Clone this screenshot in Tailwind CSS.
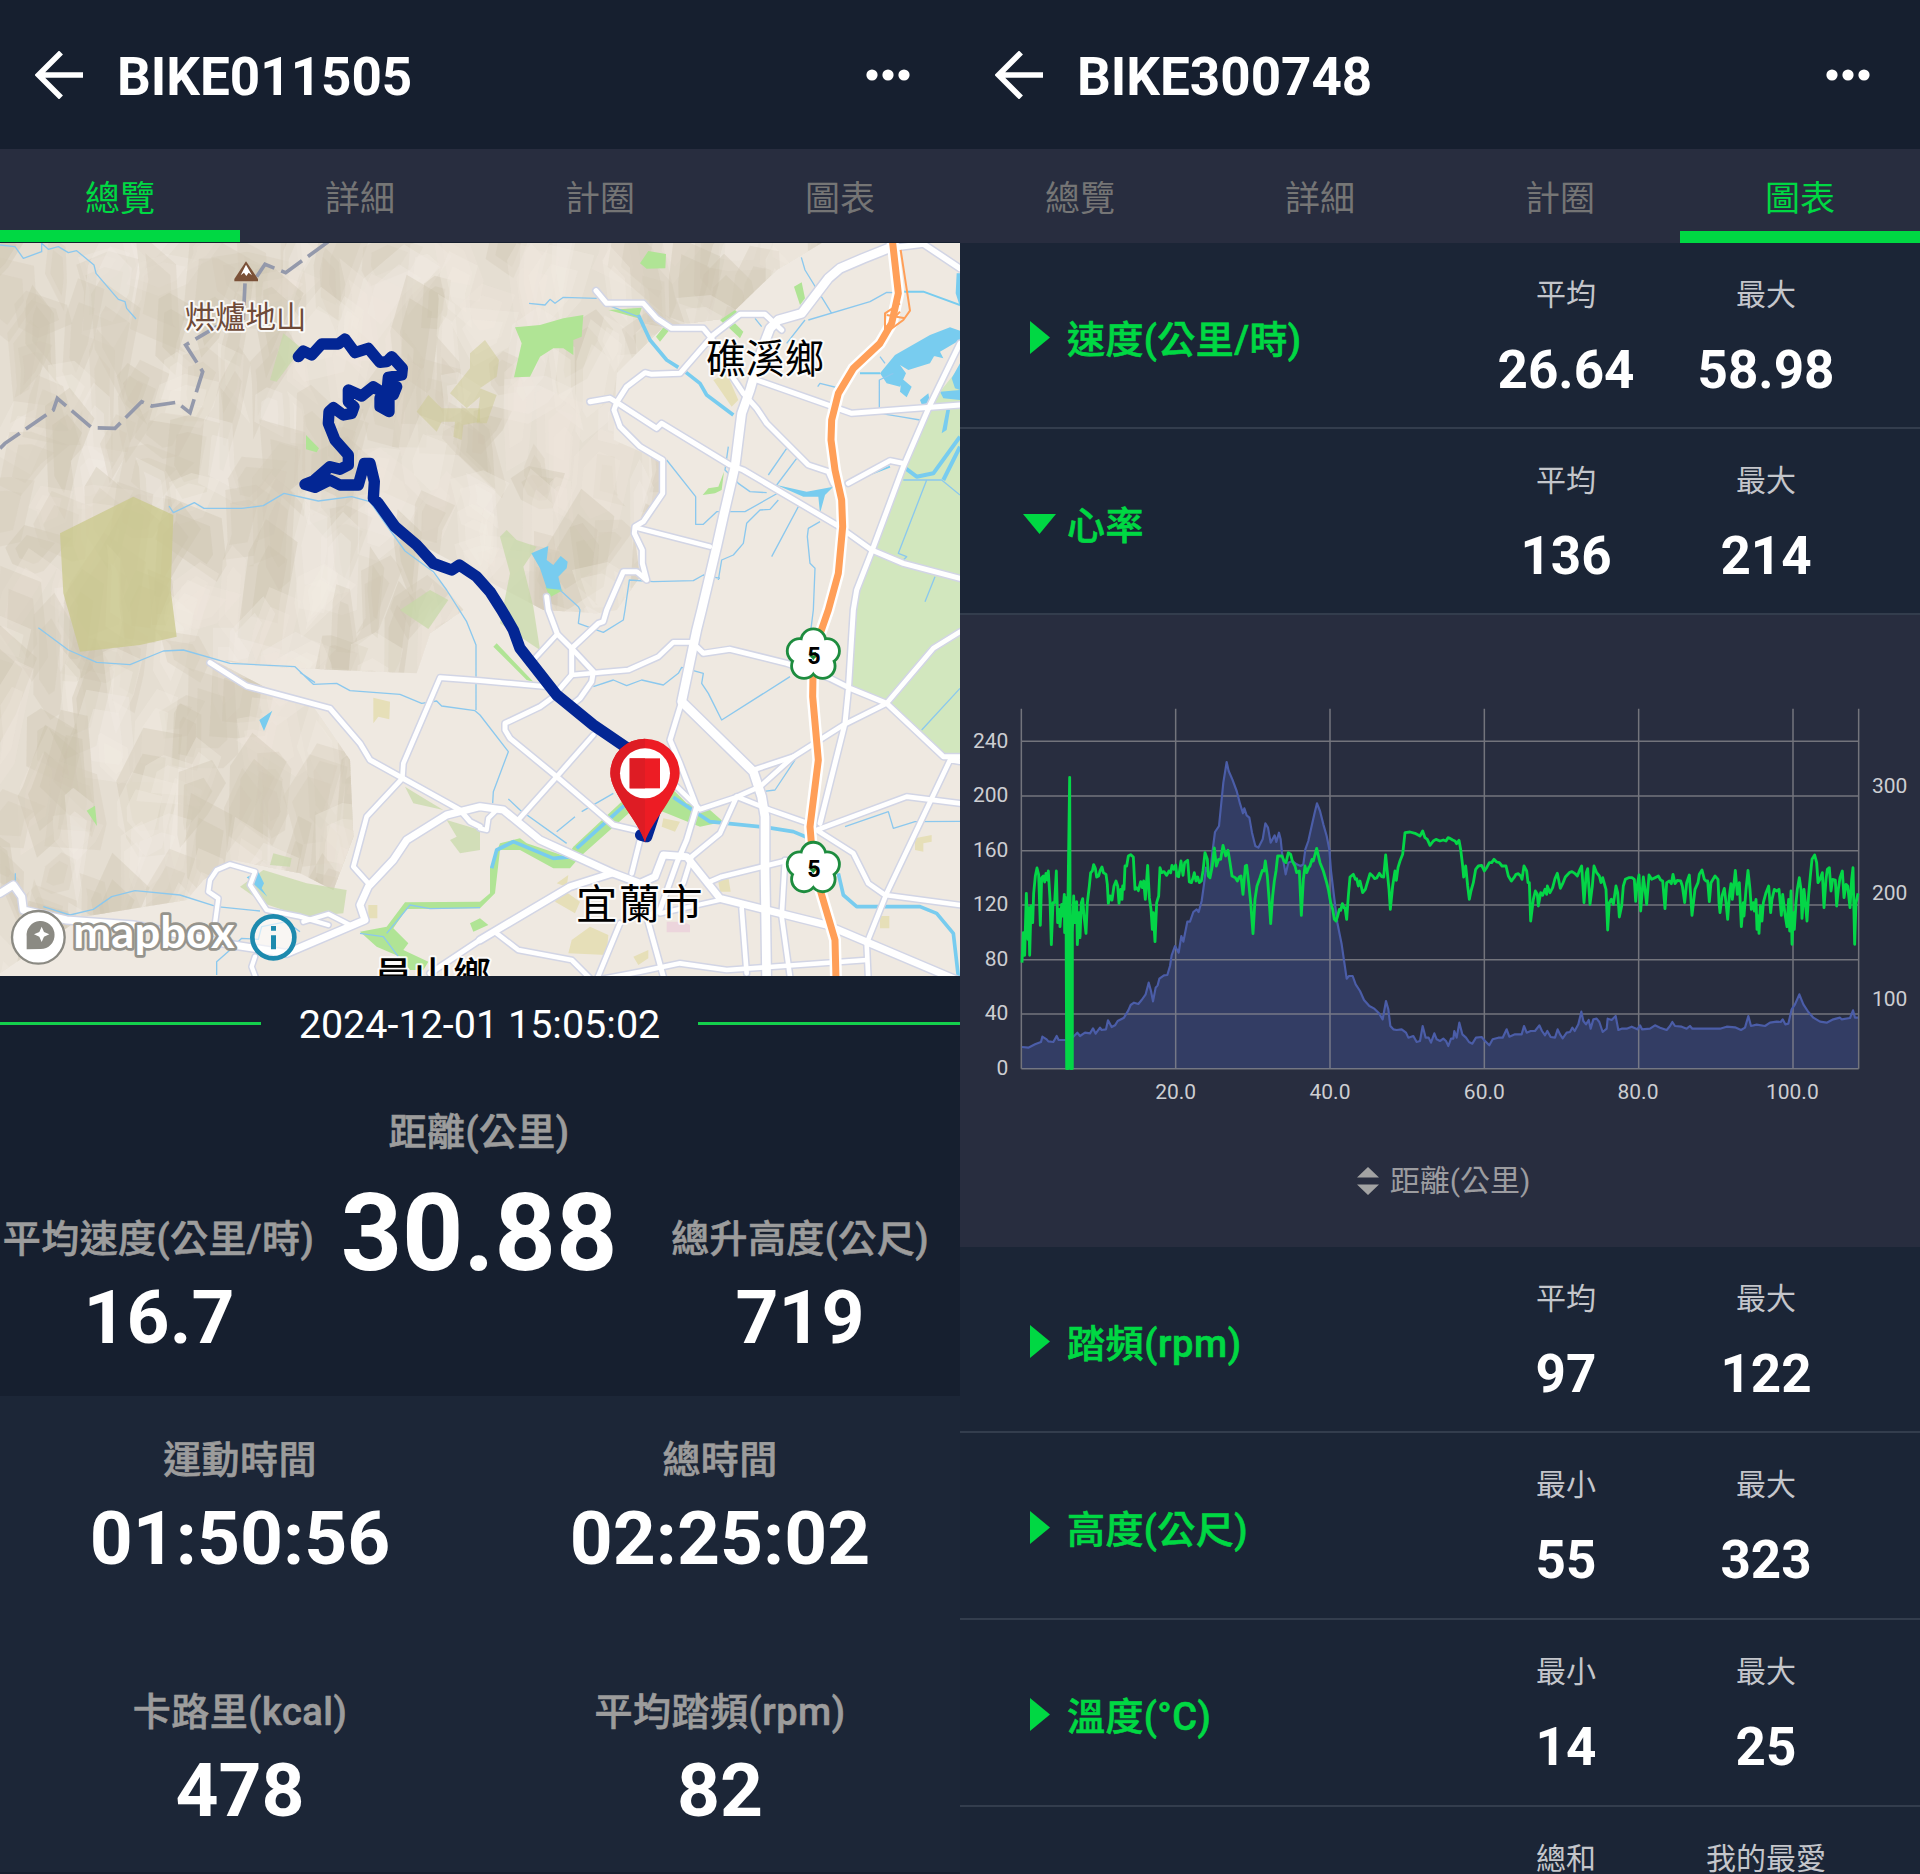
<!DOCTYPE html>
<html lang="zh-Hant">
<head>
  <meta charset="UTF-8">
  <meta name="viewport" content="width=device-width, initial-scale=1.0">
  <title>BIKE011505 / BIKE300748</title>
  <!-- Tailwind CSS -->
  <script src="https://cdn.jsdelivr.net/npm/@tailwindcss/browser@4"></script>
</head>
<body class="bg-[#161f2f] font-[Roboto,'Noto_Sans_CJK_TC',sans-serif] text-white">
  <div class="grid h-[1874px] w-[1920px] grid-cols-2 overflow-hidden">

    <!-- Overview -->
    <section class="flex h-[1874px] flex-col overflow-hidden">
      <header class="flex h-[149px] shrink-0 items-center pr-[50px] pl-[35px]">
        <svg class="h-12 w-12" viewBox="0 0 48 48" fill="none" stroke="#fff" stroke-width="5.500"><path d="M26 1.5 3.5 24 26 46.500M4 24h44"/></svg>
        <h1 class="ml-[34px] pt-[6px] text-[53px] leading-none font-bold">BIKE011505</h1>
        <svg class="ml-auto h-3 w-11" viewBox="0 0 44 12" fill="#fff"><circle cx="6" cy="6" r="5.600"/><circle cx="22" cy="6" r="5.600"/><circle cx="38" cy="6" r="5.600"/></svg>
      </header>
      <nav class="grid h-[94px] shrink-0 grid-cols-4 border-b border-[#161f2f] bg-[#282d3f] text-center text-[35px] leading-[102px] text-[#757575]">
        <a class="h-[93px] border-b-[12px] border-[#00d843] text-[#00d843]">總覽</a>
        <a class="h-[93px]">詳細</a>
        <a class="h-[93px]">計圈</a>
        <a class="h-[93px]">圖表</a>
      </nav>

      <!-- Map -->
      <svg id="map" class="block h-[733px] w-[960px] shrink-0 bg-[#efe9e1]" viewBox="0 9 2880 2199">
        <defs>
          <clipPath id="hills">
            <path d="M0 0H2480L2330 90 2180 235 1990 260 1850 400 1840 600 1980 660 1985 760 1900 860 1920 1010 1850 1110 1790 1120 1630 1110 1440 1010 1200 880 1390 1110 1290 1180 1250 1300 1010 1290 820 1280 640 1260 830 1360 940 1400 1050 1560 1060 1790 1000 1950 900 1900 700 1860 610 1920 560 1980 250 2030 0 2200Z"/>
          </clipPath>
        </defs>
        <g id="terrain" clip-path="url(#hills)"></g>
        <!-- Parks and fields -->
        <g fill="#c9c888" fill-opacity=".72">
          <path d="M180 880 400 770 520 825 512 1050 530 1190 420 1215 240 1235 190 1060Z"/>
          <path d="M1250 515 1285 465 1325 505 1440 505 1440 545 1390 555 1385 600 1360 590 1365 545 1325 545 1310 575Z" opacity=".6"/>
          <path d="M1350 460 1410 385 1410 340 1455 300 1497 360 1490 410 1440 445 1490 465 1460 550 1430 550 1440 470 1400 505Z" opacity=".6"/>
        </g>
        <g fill="#d2e7be">
          <path d="M2880 380 2800 480 2610 930 2555 1110 2550 1340 2660 1390 2810 1540 2880 1545Z"/>
          <path d="M810 420 850 280 905 325 830 425ZM1200 1110 1290 1050 1345 1080 1285 1167ZM1500 890 1520 870 1550 900 1610 920 1570 980 1600 1100 1620 1230 1500 1150 1530 1000ZM720 1940 790 1890 920 1930 1040 1950 1030 2020 910 2030 790 1990ZM1340 1740 1440 1770 1440 1830 1380 1840 1350 1800 1370 1790ZM1215 1640 1280 1680 1330 1710 1240 1690ZM820 1840 875 1855 870 1880 810 1875Z" fill="#c6d9a6" opacity=".7"/>
        </g>
        <g fill="#b0e495">
          <path d="M1545 262 1620 255 1690 235 1750 225 1745 290 1720 300 1720 345 1690 325 1660 325 1620 350 1590 410 1542 412 1565 310ZM1920 70 1945 33 1998 42 1996 85 1940 86ZM1825 210 1925 203 1915 235ZM2382 140 2405 127 2415 175 2400 195ZM2160 240 2205 210 2215 220 2170 250ZM2185 262 2205 250 2230 275 2220 295ZM1968 290 1990 262 2010 268 1980 305ZM918 585 957 625 950 637 918 628ZM260 1712 285 1697 291 1758ZM2108 765 2125 745 2155 740 2172 695 2165 750 2145 760ZM1480 1220 1490 1210 1600 1325 1580 1320ZM1636 1040 1690 1050 1650 1072Z"/>
          <path d="M1080 2075 1160 2060 1215 1987 1440 1985 1470 1960 1470 1885 1500 1810 1560 1795 1580 1810 1700 1850 1720 1820 1860 1690 1970 1600 2060 1690 2130 1710 2170 1745 2100 1760 2000 1720 1920 1690 1740 1850 1710 1885 1660 1885 1560 1830 1500 1830 1485 1960 1440 2005 1220 2007 1180 2065 1225 2110 1210 2130 1285 2165 1270 2190 1230 2190 1200 2150 1130 2120Z"/>
          <path d="M1410 2050 1440 2035 1465 2055 1420 2075Z"/>
        </g>
        <g fill="#e6dfb8">
          <path d="M1120 1373 1170 1385 1168 1438 1135 1430 1120 1450ZM1105 1995H1132V2035H1105ZM1990 1735 2040 1745 2025 1775 1985 1760ZM2155 1925 2185 1910 2192 1955 2160 1955ZM1670 1930 1705 1905 1700 1940ZM1665 1985 1690 1950 1740 1985 1725 2020ZM1705 2140 1715 2100 1770 2060 1825 2085 1820 2145ZM1900 2150 1945 2130 1945 2155 1915 2175ZM2640 2028H2668V2065H2640ZM2745 1795 2795 1785 2795 1805 2770 1810 2770 1835 2745 1830Z"/>
          <path d="M2140 420 2180 400 2215 480 2195 500Z"/>
        </g>
        <path d="M2000 2045H2050L2070 2055V2077H2000Z" fill="#ecd5dc"/>
        <!-- Water -->
        <g fill="#78ccef">
          <path d="M1594 940 1645 918 1640 960 1660 975 1682 948 1703 965 1700 985 1675 1010 1685 1050 1640 1045 1620 985ZM778 1440 817 1412 792 1473ZM740 1912 775 1895 792 1930 785 1945 802 1970 770 1940ZM2640 400 2685 345 2790 285 2850 262 2880 272 2880 300 2820 335 2830 355 2790 345 2830 300 2790 370 2725 390 2700 375 2718 400 2700 440 2660 430ZM2705 415 2735 440 2720 472 2700 455ZM2760 480 2785 460 2790 490 2765 493ZM2820 455 2880 450V480L2830 475ZM2855 415 2880 370V450L2865 445ZM2870 100H2880V200L2867 160ZM2840 505 2850 510 2840 570 2825 580ZM2330 735 2420 755 2500 740 2475 765 2460 820 2455 770 2410 770Z"/>
        </g>
        <g fill="none" stroke="#78ccef" stroke-linejoin="round">
          <path d="M2710 680 2750 710 2800 700 2880 590M2830 720 2880 620" stroke-width="12"/>
          <path d="M1475 1885 1490 1830 1540 1805 1660 1855 1720 1850M1730 1825 1880 1690M2020 1672 2130 1745 2300 1762 2380 1775 2440 1800M2515 1900 2530 1965 2570 2000 2760 2000 2810 2020 2860 2080 2875 2210M2055 395 2100 430 2120 465 2200 525M1915 225 1950 300 2000 360 2035 382" stroke-width="11"/>
          <path d="M2640 400H2580M2710 155H2770L2880 195M2540 730 2670 680" stroke-width="6"/>
        </g>
        <g fill="none" stroke="#8bc8ee" stroke-width="4" stroke-linejoin="round">
          <path d="M0 15 45 20 70 55 125 35 125 10 145 28 175 20 205 38 230 32 282 75 288 100 355 178 375 185 380 205 408 237"/>
          <path d="M507 798 520 818 583 788 612 805H725L790 797 852 760 955 783 1055 770 1110 785 1170 870 1215 933 1300 995 1340 1050 1400 1145 1428 1215V1410M115 1163 205 1230 290 1267 390 1274 490 1233 550 1230 690 1270 885 1280 940 1333 1010 1330 1050 1352 1200 1363 1265 1390 1310 1383 1325 1398 1425 1412 1440 1425 1525 1535 1480 1655 1478 1690M900 1297 945 1328"/>
          <path d="M130 2000 210 2025 280 2008 335 1970 405 1952 540 1965 650 2000 780 2013M650 2205V2165L690 2130 725 2095 775 2098 785 2060 860 2045 900 2075M46 1900V1930M1160 2080 1230 1995 1290 2006 1440 2003M1080 2080 1150 2090 1195 2150"/>
          <path d="M1587 190 1635 195 1650 178 1665 190 1690 172 1790 175M1810 190 1920 232M2404 52 2415 90 2495 220M2425 240 2610 185 2660 157 2710 158M2265 235 2285 260M2415 240 2360 310M2640 350 2655 370M2453 440 2460 430 2540 450M2638 520V420L2680 400M2640 520 2700 530 2760 540M2000 660 2087 770V853H2110L2150 815H2235L2350 750M2185 620 2175 690 2215 730 2250 755 2300 758M2305 705 2360 625M2330 735 2390 655M2335 780 2310 808 2280 810 2240 850 2230 910 2200 945 2165 960 2155 1020M2315 950 2395 800M2460 845 2425 865 2422 890 2430 970 2445 985 2440 1110 2430 1190M2710 720H2825L2880 765M2780 720 2695 940 2720 950 2710 960M2805 1010 2775 1085M2160 1015 2110 1005 2080 1022 1960 1025 1888 1020 1875 1110 1870 1140 1810 1177 1735 1150 1740 1110 1735 1100 1680 1050"/>
          <path d="M1780 1340 1840 1320 1880 1337 1925 1320 1990 1335 2035 1300 2045 1282 2110 1300 2105 1330 2125 1360 2140 1390 2165 1440 2370 1310M2765 1470 2880 1345M1525 1677 1560 1710 1700 1810M1670 1775 1725 1730M1745 1715 1840 1660M2385 1560 2325 1650 2200 1665M2535 1760 2665 1715 2680 1765 2745 1745 2880 1744"/>
        </g>
        <path d="M0 625 15 610 160 510 172 475 275 563 345 565 425 485 455 498 530 487 570 518 608 395 557 315 650 260 730 235 735 130M770 110 795 73 857 98 985 5" fill="none" stroke="#9499ab" stroke-width="11" stroke-dasharray="75 22"/>
        <g id="casings" fill="none" stroke="#d2d5e5" stroke-linejoin="round" stroke-linecap="round"></g>
        <g id="roads" fill="none" stroke="#fff" stroke-linejoin="round" stroke-linecap="round"></g>
        <!-- Freeway 5 -->
        <g fill="none" stroke-linejoin="round">
          <path d="M2677 0 2695 160 2675 250 2640 310 2560 385 2515 460 2495 540 2493 600 2505 690 2525 780 2528 860 2515 1000 2485 1110 2440 1240 2438 1370 2455 1560 2430 1760 2440 1880 2505 2100 2508 2220" stroke="#fff" stroke-width="36"/>
          <path d="M2702 30 2730 212 2710 240 2655 280 2655 220 2700 190M2660 225 2715 235M2655 265 2700 215" stroke="#ff9f58" stroke-width="6"/>
          <path d="M2677 0 2695 160 2675 250 2640 310 2560 385 2515 460 2495 540 2493 600 2505 690 2525 780 2528 860 2515 1000 2485 1110 2440 1240 2438 1370 2455 1560 2430 1760 2440 1880 2505 2100 2508 2220" stroke="#ff9f58" stroke-width="21"/>
        </g>
        <!-- Recorded track -->
        <path d="M895 350 910 333 935 345 965 312H1015L1035 297 1065 338 1105 325 1140 367 1160 365 1175 350 1207 385 1205 405 1165 412 1162 445 1190 440 1180 465 1140 475 1140 500 1167 515V470L1120 440 1085 468 1045 450V485L1062 500 1055 520 1030 525 1000 503 987 515 985 550 1005 600 1045 645 1045 675 1020 688 990 680 940 723 915 733 945 742 990 720 1020 735H1075L1093 670H1110L1123 725 1120 775 1135 790 1185 860 1250 915 1300 970 1355 990 1378 975 1430 1010 1470 1055 1505 1110 1540 1170 1560 1225 1670 1365 1780 1455 1890 1530 1940 1600 1965 1715 1940 1790 1922 1785" fill="none" stroke="#032694" stroke-width="34" stroke-linejoin="round" stroke-linecap="round"/>
        <!-- Place names -->
        <g text-anchor="middle" stroke="#fff" stroke-opacity=".85" stroke-width="12" stroke-linejoin="round" paint-order="stroke" fill="#000">
          <text x="737" y="263" font-size="91" fill="#6e4a38">烘爐地山</text>
          <text x="2295" y="398" font-size="118">礁溪鄉</text>
          <text x="1920" y="2038" font-size="124" letter-spacing="4">宜蘭市</text>
          <text x="1300" y="2247" font-size="114" letter-spacing="4" font-weight="500">員山鄉</text>
        </g>
        <path d="M738 64 774 117V124H703V117Z" fill="#7b5138"/>
        <path d="M738 74 722 106 732 98 739 108 746 98 756 106Z" fill="#fff"/>
        <g id="shields"></g>
        <!-- Finish pin -->
        <path d="M1935 1807C1920 1750 1831 1660 1831 1600a104 104 0 0 1 208 0C2039 1660 1950 1750 1935 1807Z" fill="#ed1c24"/>
        <path d="M1935 1807C1920 1750 1831 1660 1831 1600a104 104 0 0 1 104-104Z" fill="#de1c24"/>
        <circle cx="1935" cy="1600" r="75" fill="#fff"/>
        <path d="M1889 1555h91v90h-91z" fill="#ed1c24"/>
        <path d="M1889 1555h46v90h-46z" fill="#de1c24"/>
        <!-- Attribution -->
        <circle cx="115" cy="2092" r="79" fill="#fff" stroke="#8b8a83" stroke-width="7"/>
        <path d="M80 2128V2090a42 42 0 1 1 42 37ZM125 2060 118 2076 102 2083 118 2090 125 2106 132 2090 148 2083 132 2076Z" fill="#8b8a83" fill-rule="evenodd"/>
        <text x="220" y="2124" font-size="134" font-weight="700" textLength="484" lengthAdjust="spacingAndGlyphs" fill="#fff" stroke="#96948d" stroke-width="16" stroke-linejoin="round" paint-order="stroke" class="font-[Lato,sans-serif]">mapbox</text>
        <circle cx="820" cy="2092" r="63" fill="#fff" fill-opacity=".6" stroke="#1d8aae" stroke-width="14"/>
        <path d="M813 2058h15v14h-15zM813 2086h15v42h-15z" fill="#1d8aae"/>
      </svg>

      <!-- Summary -->
      <div class="flex h-[420px] shrink-0 flex-col bg-[#161f2f]">
        <div class="flex h-[95px] items-center justify-between">
          <span class="h-[3px] w-[261px] bg-[#14cf4c]"></span>
          <time class="pt-[2px] text-[39.500px] leading-none">2024-12-01 15:05:02</time>
          <span class="h-[3px] w-[262px] bg-[#14cf4c]"></span>
        </div>
        <div class="grid grid-cols-3 text-center">
          <div class="pt-[140px]">
            <p class="-ml-[3px] text-[38px] leading-[56px] font-medium tracking-[0.4px] whitespace-nowrap text-[#9c9c9c] [-webkit-text-stroke:0.6px]">平均速度(公里/時)</p>
            <p class="-ml-[2px] mt-[6px] text-[75px] leading-[88px] font-bold">16.7</p>
          </div>
          <div class="pt-[33px]">
            <p class="-ml-[2px] text-[38px] leading-[56px] font-medium tracking-[0.4px] text-[#9c9c9c] [-webkit-text-stroke:0.6px]">距離(公里)</p>
            <p class="-ml-[2px] mt-[12px] text-[107px] leading-[124px] font-bold">30.88</p>
          </div>
          <div class="pt-[140px]">
            <p class="text-[38px] leading-[56px] font-medium tracking-[0.4px] whitespace-nowrap text-[#9c9c9c] [-webkit-text-stroke:0.6px]">總升高度(公尺)</p>
            <p class="mt-[6px] text-[75px] leading-[88px] font-bold">719</p>
          </div>
        </div>
      </div>

      <!-- Totals -->
      <div class="grid h-[477px] shrink-0 grid-cols-2 grid-rows-[251px_226px] border-b border-[#161f2f] bg-[#1c2637] text-center">
        <div class="pt-[36px]">
          <p class="text-[38px] leading-[56px] font-medium tracking-[0.4px] text-[#9c9c9c] [-webkit-text-stroke:0.6px]">運動時間</p>
          <p class="mt-[6px] text-[75px] leading-[88px] font-bold">01:50:56</p>
        </div>
        <div class="pt-[36px]">
          <p class="text-[38px] leading-[56px] font-medium tracking-[0.4px] text-[#9c9c9c] [-webkit-text-stroke:0.6px]">總時間</p>
          <p class="mt-[6px] text-[75px] leading-[88px] font-bold">02:25:02</p>
        </div>
        <div class="pt-[37px]">
          <p class="text-[38px] leading-[56px] font-medium tracking-[0.5px] text-[#9c9c9c] [-webkit-text-stroke:0.6px]">卡路里(kcal)</p>
          <p class="mt-[6px] text-[75px] leading-[88px] font-bold">478</p>
        </div>
        <div class="pt-[37px]">
          <p class="text-[38px] leading-[56px] font-medium tracking-[0.5px] text-[#9c9c9c] [-webkit-text-stroke:0.6px]">平均踏頻(rpm)</p>
          <p class="mt-[6px] text-[75px] leading-[88px] font-bold">82</p>
        </div>
      </div>
    </section>

    <!-- Charts -->
    <section class="flex h-[1874px] flex-col overflow-hidden bg-[#1b2536]">
      <header class="flex h-[149px] shrink-0 items-center bg-[#161f2f] pr-[50px] pl-[35px]">
        <svg class="h-12 w-12" viewBox="0 0 48 48" fill="none" stroke="#fff" stroke-width="5.500"><path d="M26 1.5 3.5 24 26 46.500M4 24h44"/></svg>
        <h1 class="ml-[34px] pt-[6px] text-[53px] leading-none font-bold">BIKE300748</h1>
        <svg class="ml-auto h-3 w-11" viewBox="0 0 44 12" fill="#fff"><circle cx="6" cy="6" r="5.600"/><circle cx="22" cy="6" r="5.600"/><circle cx="38" cy="6" r="5.600"/></svg>
      </header>
      <nav class="grid h-[94px] shrink-0 grid-cols-4 bg-[#282d3f] text-center text-[35px] leading-[102px] text-[#757575]">
        <a class="h-[94px]">總覽</a>
        <a class="h-[94px]">詳細</a>
        <a class="h-[94px]">計圈</a>
        <a class="h-[94px] border-b-[12px] border-[#00d843] text-[#00d843]">圖表</a>
      </nav>

      <div class="grid h-[186px] shrink-0 grid-cols-[63px_443px_200px_200px] border-b-2 border-[#333d4d]">
        <svg class="col-start-1 mt-[78px] ml-[70px] h-[33px] w-5" viewBox="0 0 20 33" fill="#00d843"><path d="M0 0 20 16.500 0 33Z"/></svg>
        <h2 class="col-start-2 pt-[69px] pl-[44px] text-[38px] leading-[56px] font-medium tracking-[0.4px] text-[#00d843] [-webkit-text-stroke:0.6px]">速度(公里/時)</h2>
        <div class="text-center"><p class="pt-[30px] text-[30px] leading-[44px] text-[#c4c6cb]">平均</p><p class="mt-[21px] text-[53px] leading-[64px] font-bold">26.64</p></div>
        <div class="text-center"><p class="pt-[30px] text-[30px] leading-[44px] text-[#c4c6cb]">最大</p><p class="mt-[21px] text-[53px] leading-[64px] font-bold">58.98</p></div>
      </div>
      <div class="grid h-[186px] shrink-0 grid-cols-[63px_443px_200px_200px] border-b-2 border-[#333d4d]">
        <svg class="col-start-1 mt-[85px] ml-[63px] h-5 w-[33px]" viewBox="0 0 33 20" fill="#00d843"><path d="M0 0H33L16.500 20Z"/></svg>
        <h2 class="col-start-2 pt-[69px] pl-[44px] text-[38px] leading-[56px] font-medium tracking-[0.4px] text-[#00d843] [-webkit-text-stroke:0.6px]">心率</h2>
        <div class="text-center"><p class="pt-[30px] text-[30px] leading-[44px] text-[#c4c6cb]">平均</p><p class="mt-[21px] text-[53px] leading-[64px] font-bold">136</p></div>
        <div class="text-center"><p class="pt-[30px] text-[30px] leading-[44px] text-[#c4c6cb]">最大</p><p class="mt-[21px] text-[53px] leading-[64px] font-bold">214</p></div>
      </div>

      <!-- Heart rate over altitude -->
      <div class="flex h-[632px] shrink-0 flex-col items-center bg-[#282d3f]">
        <svg class="h-[525px] w-[960px]" viewBox="0 -223 2880 1575">
          <path id="area" fill="#343f68" fill-opacity=".9"/>
          <path d="M184 156H2696M184 320H2696M184 484H2696M184 647H2696M184 811H2696M184 974H2696M184 1138H2696M184 58V1138M647 58V1138M1110 58V1138M1573 58V1138M2036 58V1138M2499 58V1138M2696 58V1138" stroke="#8c8c91" stroke-opacity=".75" stroke-width="4.500"/>
          <polyline id="altitude" fill="none" stroke="#4b5da8" stroke-width="6.500" stroke-linejoin="round"/>
          <polyline id="heart" fill="none" stroke="#04d647" stroke-width="8.500" stroke-linejoin="round"/>
          <g fill="#cdced2" font-size="63">
            <g text-anchor="end">
              <text x="145" y="176">240</text><text x="145" y="339">200</text><text x="145" y="503">160</text><text x="145" y="666">120</text><text x="145" y="830">80</text><text x="145" y="993">40</text><text x="145" y="1157">0</text>
            </g>
            <g text-anchor="middle">
              <text x="647" y="1228">20.0</text><text x="1110" y="1228">40.0</text><text x="1573" y="1228">60.0</text><text x="2034" y="1228">80.0</text><text x="2497" y="1228">100.0</text>
            </g>
            <text x="2736" y="311">300</text><text x="2736" y="631">200</text><text x="2736" y="949">100</text>
          </g>
        </svg>
        <div class="mt-[19px] flex items-center gap-[11px] pl-[7px] text-[30px] leading-[44px] text-[#9c9ca0]">
          <svg class="h-7 w-[22px]" viewBox="0 0 22 28" fill="#a3a3a3"><path d="M11 0 22 10.500H0ZM0 17.500H22L11 28Z"/></svg>
          <span>距離(公里)</span>
        </div>
      </div>

      <div class="grid h-[186px] shrink-0 grid-cols-[63px_443px_200px_200px] border-b-2 border-[#333d4d]">
        <svg class="col-start-1 mt-[78px] ml-[70px] h-[33px] w-5" viewBox="0 0 20 33" fill="#00d843"><path d="M0 0 20 16.500 0 33Z"/></svg>
        <h2 class="col-start-2 pt-[69px] pl-[44px] text-[38px] leading-[56px] font-medium tracking-[0.6px] text-[#00d843] [-webkit-text-stroke:0.6px]">踏頻(rpm)</h2>
        <div class="text-center"><p class="pt-[30px] text-[30px] leading-[44px] text-[#c4c6cb]">平均</p><p class="mt-[21px] text-[53px] leading-[64px] font-bold">97</p></div>
        <div class="text-center"><p class="pt-[30px] text-[30px] leading-[44px] text-[#c4c6cb]">最大</p><p class="mt-[21px] text-[53px] leading-[64px] font-bold">122</p></div>
      </div>
      <div class="grid h-[187px] shrink-0 grid-cols-[63px_443px_200px_200px] border-b-2 border-[#333d4d]">
        <svg class="col-start-1 mt-[78px] ml-[70px] h-[33px] w-5" viewBox="0 0 20 33" fill="#00d843"><path d="M0 0 20 16.500 0 33Z"/></svg>
        <h2 class="col-start-2 pt-[69px] pl-[44px] text-[38px] leading-[56px] font-medium tracking-[0.4px] text-[#00d843] [-webkit-text-stroke:0.6px]">高度(公尺)</h2>
        <div class="text-center"><p class="pt-[30px] text-[30px] leading-[44px] text-[#c4c6cb]">最小</p><p class="mt-[21px] text-[53px] leading-[64px] font-bold">55</p></div>
        <div class="text-center"><p class="pt-[30px] text-[30px] leading-[44px] text-[#c4c6cb]">最大</p><p class="mt-[21px] text-[53px] leading-[64px] font-bold">323</p></div>
      </div>
      <div class="grid h-[187px] shrink-0 grid-cols-[63px_443px_200px_200px] border-b-2 border-[#333d4d]">
        <svg class="col-start-1 mt-[78px] ml-[70px] h-[33px] w-5" viewBox="0 0 20 33" fill="#00d843"><path d="M0 0 20 16.500 0 33Z"/></svg>
        <h2 class="col-start-2 pt-[69px] pl-[44px] text-[38px] leading-[56px] font-medium tracking-[0.4px] text-[#00d843] [-webkit-text-stroke:0.6px]">溫度(°C)</h2>
        <div class="text-center"><p class="pt-[30px] text-[30px] leading-[44px] text-[#c4c6cb]">最小</p><p class="mt-[21px] text-[53px] leading-[64px] font-bold">14</p></div>
        <div class="text-center"><p class="pt-[30px] text-[30px] leading-[44px] text-[#c4c6cb]">最大</p><p class="mt-[21px] text-[53px] leading-[64px] font-bold">25</p></div>
      </div>
      <div class="grid shrink-0 grid-cols-[506px_200px_200px] text-center text-[30px] leading-[38px] text-[#c4c6cb]">
        <p class="col-start-2 pt-[33px]">總和</p>
        <p class="pt-[33px]">我的最愛</p>
      </div>
    </section>
  </div>

  <!-- JavaScript -->
  <script>
    // Hill shading: jittered facets, same seed every time
    let seed = 11;
    const rnd = () => (seed = (seed * 16807) % 2147483647) / 2147483647;
    const shades = ["#cfc8b4", "#d2cbb8", "#c9c2ac", "#f3ece4", "#f3ece6", "#f1e6de"];
    let facets = '<path d="M0 0H2880V2220H0Z" fill="#e5ded2"/>';
    for (let y = 0; y < 2220; y += 120) {
      for (let x = 0; x < 2450; x += 110) {
        const cx = x + rnd() * 110, cy = y + rnd() * 120, tall = 50 + rnd() * 110, wide = 20 + rnd() * 50, lean = (rnd() - 0.3) * 80;
        const pts = [[-wide, -tall * rnd()], [-wide * rnd() + lean, -tall], [wide + lean, -tall * (0.4 + rnd() * 0.5)], [wide * (0.4 + rnd()), tall * rnd()], [wide * rnd() - lean, tall], [-wide * (0.5 + rnd()), tall * rnd()]];
        const shade = shades[Math.floor(rnd() * 6)];
        // a wide faint facet with a smaller one inside it
        [1.25, 0.75].forEach(k => {
          facets += `<polygon points="${pts.map(p => (cx + p[0] * k).toFixed() + "," + (cy + p[1] * k).toFixed()).join(" ")}" fill="${shade}" fill-opacity=".32"/>`;
        });
      }
    }
    document.getElementById("terrain").innerHTML = facets;

    // Roads: [origin x, origin y, width, points]
    const roads = [
      [1440, 0, 17, "1225,25 1330,12 1440,85"],
      [1440, 0, 15, "348,152 380,190 490,190 530,235 575,265 670,265 695,295 750,400 790,460 830,505 860,550 985,675 1045,695 1060,730"],
      [1440, 0, 15, "905,270 855,223 780,223 700,285 600,400 515,403 495,398 440,440 410,487 402,510 420,560 480,620 548,660 548,760 490,845 465,860 463,880 487,930 487,970 500,1020 470,995 430,995 380,1110 370,1145 355,1150 275,1225"],
      [1440, 0, 15, "330,485 390,475 410,487 530,565 545,550 750,675 790,690 1070,855 1175,930 1270,970 1440,1015"],
      [1440, 0, 13, "465,862 690,920"],
      [1440, 0, 15, "830,420 1115,520 1440,495"],
      [1440, 0, 15, "1440,310 1350,495 1270,680 1175,935 1130,1050 1120,1110 1105,1350 1095,1450 1020,1750"],
      [1440, 0, 15, "1105,730 1230,662 1270,670"],
      [1440, 1110, 15, "200,-40 205,0 232,72 275,115 340,185 335,215 300,265 275,285"],
      [1440, 1110, 15, "275,115 275,195 215,265 180,290 75,340 75,360 90,385 230,500 400,645 465,660"],
      [1440, 1110, 13, "232,72 165,145"],
      [1440, 1110, 14, "275,195 445,180 535,140 580,97 640,97"],
      [1440, 1110, 15, "650,110 670,130 750,118 920,160 1050,205 1110,235 1220,280 1390,440 1440,440"],
      [1440, 1110, 14, "200,230 0,212 -120,203 -230,460 -233,505 -340,620 -380,770 -335,820"],
      [1440, 1110, 14, "340,375 230,500 110,635"],
      [1440, 1110, 15, "605,275 570,390 600,460 650,590 620,690 590,760 540,900 500,920 550,1100"],
      [1440, 1110, 14, "590,530 660,598 760,565 840,530 940,440 1090,345 1220,280 1360,115 1440,65"],
      [1440, 1110, 14, "820,480 940,440"],
      [1440, 1110, 14, "985,640 870,600 770,560 720,670 635,740 610,820"],
      [1440, 1110, 14, "1440,580 1280,560 1010,660 1120,730 1165,820 1215,855 1440,885"],
      [1440, 1110, 14, "480,690 455,790"],
      [1440, 1110, 14, "50,970 115,1020 275,1050 330,1105"],
      [1440, 1110, 14, "420,940 350,1110 480,1085 600,1060 740,1080 1160,1050"],
      [1440, 1110, 14, "785,895 800,1090"],
      [1440, 1110, 14, "915,750 905,920 930,1100"],
      [1440, 1110, 14, "690,815 725,800 990,735"],
      [1440, 1110, 13, "540,910 720,870"],
      [1440, 1110, 14, "1440,455 1410,450 1220,850 1160,1000 1165,1110"],
      [1440, 1110, 13, "0,655 20,660 25,625 50,600"],
      [0, 1110, 15, "630,158 740,228 990,295 1080,400 1110,450 1380,600 1410,635 1440,650"],
      [0, 1110, 13, "645,940 655,865 625,845 630,810 650,780 690,763 765,785 750,825 800,900 900,920 985,945"],
      [0, 1110, 13, "910,935 985,912 1050,945"],
      [0, 1110, 13, "770,1110 755,1070 765,1040"],
      [0, 1110, 15, "1440,990 1290,1090"],
      [1440, 1110, 21, "-1440,850 -1400,825 -1375,860 -1370,900 -1240,930 -1040,945 -740,1005 -580,1030 -345,930 -360,885 -335,830 -260,750 -220,690 -100,615 0,590 70,600 180,690 400,790 480,820 525,800 550,735 620,740 720,865 1040,945 1430,1110"],
      [1440, 1110, 20, "0,990 270,830 395,790"],
      [1440, 0, 26, "1225,25 1150,55 1080,85 1045,115 965,220 895,240 870,265 845,330 810,450 785,520 765,680 730,830 710,920 665,1110 650,1170 605,1385 820,1595 845,1670 855,1730 855,1890 860,2220"],
    ];
    const line = (r, extra) => `<polyline transform="translate(${r[0]} ${r[1]})" stroke-width="${r[2] + extra}" points="${r[3]}"/>`;
    document.getElementById("casings").innerHTML = roads.map(r => line(r, 9)).join("");
    document.getElementById("roads").innerHTML = roads.map(r => line(r, 0)).join("");

    // Plum blossom route shields
    const petals = [[0, -39], [41, -10], [28, 35], [-28, 35], [-41, -10]];
    document.getElementById("shields").innerHTML = [[2440, 1243], [2440, 1883]].map(([x, y]) =>
      petals.map(p => `<circle cx="${x + p[0]}" cy="${y + p[1]}" r="36" fill="#fff" stroke="#1d8c3e" stroke-width="11"/>`).join("") +
      petals.map(p => `<circle cx="${x + p[0]}" cy="${y + p[1]}" r="33" fill="#fff"/>`).join("") +
      `<text x="${x + 2}" y="${y + 29}" text-anchor="middle" font-size="70" font-weight="700">5</text>`).join("");

    // Chart series
    const altitude = "186,1073 205,1075 225,1065 243,1058 247,1042 260,1050 265,1056 280,1058 290,1040 296,1052 318,1052 340,1042 352,1030 360,1040 375,1030 390,1032 399,1017 407,1033 420,1015 425,1022 438,1020 444,993 455,1013 465,1008 473,995 492,985 505,963 512,947 522,940 535,944 545,932 557,915 566,880 573,905 579,936 587,895 593,888 598,868 612,858 622,857 630,830 635,798 645,770 656,790 664,740 670,757 682,697 690,697 700,668 710,660 716,668 725,635 732,585 738,535 750,560 757,490 765,428 777,410 783,350 790,280 800,218 806,245 817,270 830,305 840,343 849,372 853,357 860,378 868,385 876,430 886,470 895,475 908,450 916,402 924,415 932,460 940,445 944,438 949,458 957,430 962,450 966,490 977,555 985,520 997,515 1010,525 1022,530 1030,525 1036,480 1045,455 1055,410 1064,370 1071,342 1080,365 1090,405 1100,440 1108,480 1113,545 1122,620 1132,700 1145,765 1153,820 1160,868 1167,860 1178,860 1187,885 1200,905 1212,932 1228,950 1243,958 1257,972 1268,990 1278,935 1285,960 1291,1010 1300,1020 1310,1022 1325,1020 1338,1030 1345,1045 1360,1040 1370,1058 1380,1055 1388,1010 1397,1045 1406,1045 1413,1060 1423,1032 1430,1050 1440,1055 1450,1048 1458,1055 1465,1070 1473,1048 1480,1048 1483,1025 1490,1045 1498,1000 1507,1035 1518,1045 1527,1058 1537,1063 1548,1045 1565,1043 1575,1055 1588,1068 1598,1050 1615,1045 1628,1045 1640,1020 1648,1042 1665,1035 1685,1035 1692,1010 1700,1030 1712,1025 1725,1025 1738,1008 1746,1025 1755,1038 1762,1025 1772,1043 1785,1045 1793,1020 1800,1035 1808,1047 1820,1030 1830,1028 1837,1015 1844,1025 1855,1005 1864,967 1870,995 1878,1005 1886,992 1892,1018 1900,990 1910,988 1918,998 1928,1028 1940,1018 1943,988 1955,992 1967,980 1975,1022 1985,1018 2000,1018 2015,1012 2032,1020 2040,1008 2046,1020 2070,1018 2085,1008 2100,1015 2120,1022 2130,1010 2137,998 2145,1010 2165,1012 2180,1018 2190,1010 2197,1018 2220,1018 2280,1018 2300,1012 2325,1014 2343,1022 2355,1015 2365,980 2373,1010 2390,1006 2415,1010 2430,1000 2450,997 2462,998 2468,990 2476,1005 2485,1003 2495,960 2505,945 2518,915 2530,945 2545,968 2560,985 2580,997 2600,1000 2620,990 2640,985 2645,990 2670,986 2679,963 2685,985 2694,985";
    const heartA = "186,820 190,730 194,798 199,612 204,750 206,655 209,798 213,650 218,700 221,612 226,560 231,536 236,556 241,708 245,565 250,560 254,578 258,552 262,572 265,545 270,630 274,766 279,640 284,640 289,545 293,700 298,660 300,712 305,645 308,680 313,615 314,730 318,625 320,1138 324,1138 324,625 329,264 332,1138 337,1138 337,730 341,620 344,700 350,637 352,766 357,670 360,745 364,640 368,628 372,680 378,732 382,640 388,590 392,550 397,545 401,526 406,537 410,563 416,560 420,545 426,533 430,550 438,555 442,585 445,642 450,620 456,632 462,590 468,575 473,590 477,642 482,600 486,630 488,590 492,600 495,530 500,530 505,500 512,496 520,503 525,600 530,595 535,604 542,577 547,595 551,575 556,630 563,528 568,625 573,660 577,720 580,670 585,757 590,640 596,620 600,535 605,550 612,547 620,558 627,545 632,550 636,528 642,540 647,527 651,560 656,562 663,515 669,558 674,520 683,513 688,578 694,580 700,563 703,550 708,575 713,563 718,580 724,575 729,545 735,490 742,510 745,560 750,565 757,530 763,476 769,530 776,510 782,510 789,468 797,500 804,483 810,520 816,560 826,565 832,575 838,563 843,560 849,615 856,530 860,528 866,580 872,640 879,733 885,630 891,590 900,565 907,543 912,545 916,515 922,560 928,640 932,703 938,620 943,575 948,545 953,500 960,500 966,500 972,515 978,520 985,490 992,495 997,515 1005,530 1010,550 1018,545 1024,678 1030,570 1035,530 1040,550 1046,535 1050,530 1056,510 1060,515 1070,477 1080,520 1090,545 1100,580 1105,600 1112,640 1118,660 1123,690 1128,695 1133,680 1138,660 1142,663 1147,643 1152,655 1155,655 1160,690 1165,620 1170,563 1180,555 1186,570 1190,568 1195,590 1200,575 1208,610 1216,600 1222,580 1230,553 1238,560 1244,568 1250,566 1258,552 1265,562 1271,563 1277,497 1283,560 1287,600 1291,660 1298,590 1305,545 1309,573 1314,535 1320,515 1328,495 1335,430 1350,428 1365,432 1380,440 1388,425 1395,445 1402,450 1410,468 1420,455 1428,450 1440,455";
    const heartB = "10,452 18,455 24,445 30,447 38,452 45,455 50,463 57,453 62,480 68,530 71,563 77,530 83,590 88,630 93,605 100,580 107,540 115,530 125,528 133,545 140,535 148,520 155,520 162,510 170,518 178,520 186,530 198,530 205,560 214,575 222,565 228,555 235,553 242,560 246,570 252,530 260,545 264,580 268,580 272,695 280,630 286,605 292,615 295,650 302,610 308,618 315,600 320,615 322,590 330,610 338,595 345,568 352,552 361,597 368,583 376,563 388,550 396,547 404,552 412,560 420,540 425,530 432,640 439,550 443,538 450,645 457,590 462,530 470,550 478,560 483,580 488,565 495,590 498,600 503,722 508,640 514,630 520,645 528,590 533,610 538,683 545,650 550,590 556,570 566,565 576,565 583,570 587,636 590,600 597,557 602,665 610,563 615,600 620,645 627,557 635,570 645,565 655,560 662,572 668,575 675,658 680,580 688,575 694,583 699,555 705,583 712,573 722,575 727,590 734,640 740,580 748,557 756,678 765,600 774,580 778,555 786,542 793,570 798,575 803,575 808,637 813,580 825,560 834,570 837,640 840,670 846,620 853,597 858,640 863,690 868,620 873,583 877,630 886,543 892,615 898,580 904,712 910,640 912,680 918,600 924,543 930,600 934,660 940,640 943,665 948,630 951,720 955,680 957,732 961,650 966,695 970,640 978,610 986,590 992,670 996,630 1003,600 1010,605 1017,600 1024,678 1028,615 1032,650 1035,675 1041,712 1046,630 1049,725 1053,605 1056,765 1060,670 1063,720 1068,640 1072,600 1078,565 1083,600 1086,687 1092,600 1096,640 1101,695 1106,615 1111,560 1116,510 1124,497 1130,520 1134,580 1140,570 1147,550 1152,655 1158,570 1162,540 1168,535 1173,605 1178,570 1186,572 1190,650 1195,600 1200,565 1207,545 1212,625 1218,585 1223,590 1230,655 1235,570 1239,535 1244,765 1248,640 1254,612";
    const shifted = heartB.split(" ").map(p => { const [x, y] = p.split(","); return (+x + 1440) + "," + y; }).join(" ");
    document.getElementById("altitude").setAttribute("points", altitude);
    document.getElementById("area").setAttribute("d", "M186,1138 L" + altitude + " L2694,1138Z");
    document.getElementById("heart").setAttribute("points", heartA + " " + shifted);
  </script>
</body>
</html>
